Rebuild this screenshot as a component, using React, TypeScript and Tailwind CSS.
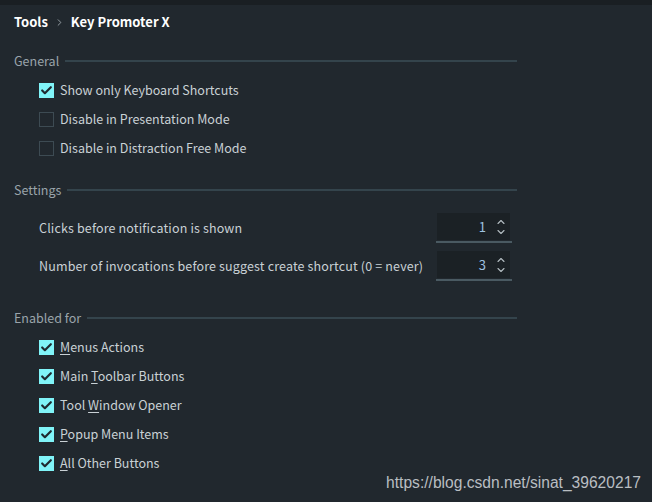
import { Check, ChevronUp, ChevronDown, ChevronRight } from "lucide-react";

const FONT = "font-['Noto_Sans_CJK_SC','Noto_Sans',sans-serif]";

function Section({ title }: { title: string }) {
  return (
    <div className="flex items-center gap-[6px] h-[20px] w-[517px] pl-[14px]">
      <span className="text-[12.5px] text-[#9aa4aa] leading-none">{title}</span>
      <div className="flex-1 h-[2px] bg-[#34444c]" />
    </div>
  );
}

function Box({ checked, label, mnemonic }: { checked: boolean; label: string; mnemonic?: number }) {
  const text =
    mnemonic === undefined ? (
      label
    ) : (
      <>
        {label.slice(0, mnemonic)}
        <span className="underline underline-offset-2">{label[mnemonic]}</span>
        {label.slice(mnemonic + 1)}
      </>
    );
  return (
    <div className="flex items-center h-[29px] pl-[39px]">
      {checked ? (
        <div className="w-[15px] h-[15px] bg-[#80f4f8] flex items-center justify-center">
          <Check className="w-[13px] h-[13px] text-[#1e2a30]" strokeWidth={4} />
        </div>
      ) : (
        <div className="w-[15px] h-[15px] border border-[#3d4b53]" />
      )}
      <span className="ml-[6px] text-[12.5px] text-[#c9d1d5] leading-none">{text}</span>
    </div>
  );
}

function Spinner({ label, value }: { label: string; value: number }) {
  return (
    <div className="flex items-center h-[38px] pl-[39px] w-[512px]">
      <span className="flex-1 text-[12.5px] text-[#c9d1d5] leading-none tracking-[0.15px]">{label}</span>
      <div className="flex flex-col">
        <div className="w-[73px] h-[27px] bg-[#1b2125] ml-[1px] flex items-center justify-end pr-[3px]">
          <span className="text-[13px] text-[#9ec2e0] leading-none mr-[9px]">{value}</span>
          <div className="flex flex-col text-[#b3bcc1]">
            <ChevronUp className="w-[12px] h-[12px] -mb-[2px]" strokeWidth={2.2} />
            <ChevronDown className="w-[12px] h-[12px]" strokeWidth={2.2} />
          </div>
        </div>
        <div className="w-[76px] h-[2px] bg-[#4a5a62] mt-[1px]" />
      </div>
    </div>
  );
}

export default function App() {
  return (
    <div className={`w-[652px] h-[502px] bg-[#21282e] relative ${FONT}`}>
      <div className="h-[5px] bg-[#1a1f23]" />

      {/* Breadcrumb */}
      <div className="flex items-center h-[34px] pl-[14px] text-[13px] font-bold text-white">
        <span>Tools</span>
        <ChevronRight className="w-[11px] h-[11px] text-[#9aa4aa] mx-[6px]" strokeWidth={2} />
        <span>Key Promoter X</span>
      </div>

      <div className="mt-[12px]">
        <Section title="General" />
      </div>
      <div className="mt-[5px]">
        <Box checked label="Show only Keyboard Shortcuts" />
        <Box checked={false} label="Disable in Presentation Mode" />
        <Box checked={false} label="Disable in Distraction Free Mode" />
      </div>

      <div className="mt-[17px]">
        <Section title="Settings" />
      </div>
      <div className="mt-[9px]">
        <Spinner label="Clicks before notification is shown" value={1} />
        <Spinner label="Number of invocations before suggest create shortcut (0 = never)" value={3} />
      </div>

      <div className="mt-[23px]">
        <Section title="Enabled for" />
      </div>
      <div className="mt-[5px]">
        <Box checked label="Menus Actions" mnemonic={0} />
        <Box checked label="Main Toolbar Buttons" mnemonic={5} />
        <Box checked label="Tool Window Opener" mnemonic={5} />
        <Box checked label="Popup Menu Items" mnemonic={0} />
        <Box checked label="All Other Buttons" mnemonic={0} />
      </div>

      {/* watermark */}
      <div className="absolute right-[11px] bottom-[8px] font-['Liberation_Sans',Arial,sans-serif] text-[15.6px] text-[#b9bec2]">
        https://blog.csdn.net/sinat_39620217
      </div>
    </div>
  );
}
